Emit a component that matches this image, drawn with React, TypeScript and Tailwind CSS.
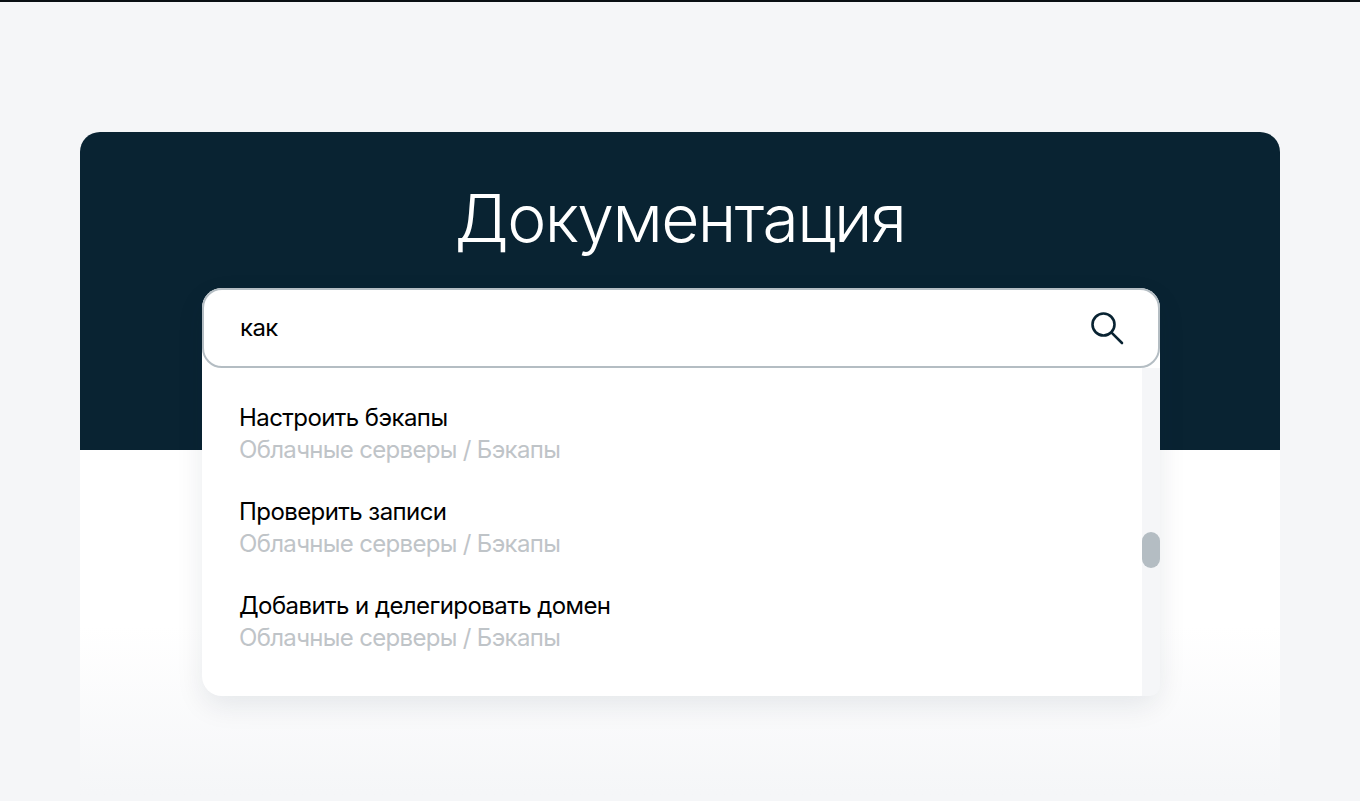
import React from "react";

const rows = ["Настроить бэкапы", "Проверить записи", "Добавить и делегировать домен"];

export default function App() {
  return (
    <div className="h-[801px] overflow-hidden bg-[#f5f6f8] border-t-2 border-[#0a0f14] pt-[130px] px-20 font-['Inter',sans-serif]">
      <div className="relative h-[669px] rounded-t-[20px] overflow-hidden bg-gradient-to-b from-white from-[74%] to-[#f5f6f8] to-[99%]">
        <div className="h-[318px] bg-[#092332] pt-[48px] text-center">
          <h1 className="text-[66px] leading-[76px] font-[340] text-white tracking-[-1.6px]">Документация</h1>
        </div>
      </div>
      <div className="absolute left-[202px] top-[288px] w-[958px] h-[408px] rounded-[20px] bg-white shadow-[0_10px_28px_rgba(8,35,51,0.09)]">
        <div className="h-20 rounded-[20px] border-2 border-[#b4bdc3] flex items-center justify-between pl-[36px] pr-[34px]">
          <span className="text-[24px] tracking-[-0.6px] text-black">как</span>
          <svg width="34" height="34" viewBox="0 0 34 34" fill="none" stroke="#092332" strokeWidth="2.6" strokeLinecap="round">
            <circle cx="13.5" cy="13.5" r="11" />
            <path d="M21.8 21.8L32 32" />
          </svg>
        </div>
        <div className="flex h-[328px]">
          <div className="flex-1 pl-[37px] pt-[34px] flex flex-col gap-[30px]">
            {rows.map((r) => (
              <div key={r}>
                <div className="text-[24px] leading-[32px] tracking-[-0.57px] text-black">{r}</div>
                <div className="text-[24px] leading-[32px] tracking-[-0.68px] text-[#bfc4c8]">Облачные серверы / Бэкапы</div>
              </div>
            ))}
          </div>
          <div className="relative w-[18px] bg-[#f5f6f8] rounded-br-[10px]">
            <div className="absolute top-[164px] left-0 w-[18px] h-9 rounded-full bg-[#b4bdc3]" />
          </div>
        </div>
      </div>
    </div>
  );
}
